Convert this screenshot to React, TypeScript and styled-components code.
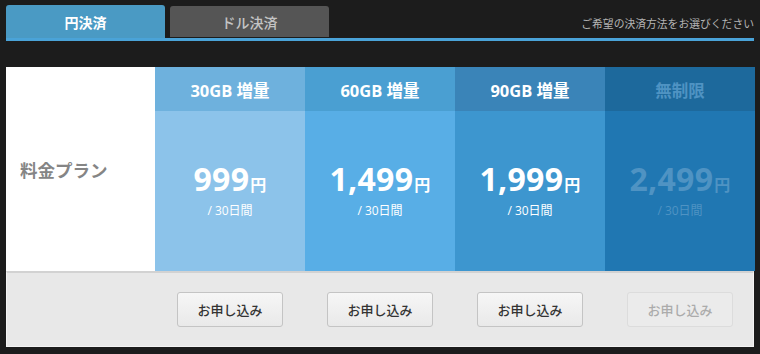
import styled, { createGlobalStyle } from "styled-components";

const GlobalStyle = createGlobalStyle`
  body {
    margin: 0;
    background: #1c1c1c;
    font-family: "Open Sans", "Noto Sans CJK JP", sans-serif;
  }
`;

const Page = styled.div`
  width: 748px;
  padding: 5px 6px 6px;
`;

const TabBar = styled.div`
  display: flex;
  align-items: flex-end;
  gap: 5px;
  border-bottom: 3px solid #4aa3d8;
`;

const Tab = styled.div<{ $active?: boolean }>`
  width: 159px;
  height: ${(p) => (p.$active ? "33px" : "31px")};
  margin-bottom: ${(p) => (p.$active ? "0" : "1px")};
  display: flex;
  align-items: center;
  justify-content: center;
  border-radius: 3px 3px 0 0;
  background: ${(p) => (p.$active ? "#4a9ac4" : "#555555")};
  color: ${(p) => (p.$active ? "#ffffff" : "#c4c4c4")};
  font-family: "Noto Sans CJK JP", sans-serif;
  font-size: 14px;
  font-weight: ${(p) => (p.$active ? 700 : 500)};
`;

const Hint = styled.div`
  margin-left: auto;
  padding-bottom: 7px;
  color: #b4b4b4;
  font-family: "Noto Sans CJK JP", sans-serif;
  font-size: 10.8px;
`;

const Table = styled.div`
  margin-top: 26px;
  display: grid;
  grid-template-columns: 149px repeat(4, 150px);
  grid-template-rows: 44px 160px;
`;

const LabelCell = styled.div`
  grid-row: 1 / span 2;
  background: #ffffff;
  display: flex;
  align-items: center;
  padding-left: 14px;
  color: #858585;
  font-family: "Noto Sans CJK JP", sans-serif;
  font-size: 17.5px;
  font-weight: 700;
`;

const HeadCell = styled.div<{ $bg: string; $fg: string }>`
  background: ${(p) => p.$bg};
  color: ${(p) => p.$fg};
  display: flex;
  align-items: center;
  justify-content: center;
  font-size: 16.5px;
  font-weight: 700;
  padding-top: 1px;
`;

const PriceCell = styled.div<{ $bg: string; $fg: string }>`
  grid-row: 2;
  background: ${(p) => p.$bg};
  color: ${(p) => p.$fg};
  display: flex;
  flex-direction: column;
  align-items: center;
  justify-content: center;
  padding-bottom: 4px;
`;

const Amount = styled.div`
  font-size: 32px;
  font-weight: 700;
  line-height: 38px;
  letter-spacing: 0.3px;

  span {
    font-family: "Noto Sans CJK JP", sans-serif;
    font-size: 16px;
    margin-left: 1px;
  }
`;

const Period = styled.div`
  font-size: 12px;
  line-height: 16px;
  font-family: "Open Sans", "Noto Sans CJK JP", sans-serif;
`;

const Footer = styled.div`
  display: grid;
  grid-template-columns: 148px repeat(4, 150px);
  background: #e8e8e8;
  border: 1px solid #f4f4f4;
  border-top: 2px solid #d2d2d2;
  box-sizing: border-box;
  height: 76px;
`;

const ButtonSlot = styled.div`
  display: flex;
  justify-content: center;
  padding-top: 19px;
`;

const ApplyButton = styled.button<{ $disabled?: boolean }>`
  width: 106px;
  height: 35px;
  border-radius: 3px;
  border: 1px solid ${(p) => (p.$disabled ? "#dcdcdc" : "#c4c4c4")};
  background: ${(p) =>
    p.$disabled ? "#ebebeb" : "linear-gradient(#f6f6f6, #e9e9e9)"};
  color: ${(p) => (p.$disabled ? "#ababab" : "#333333")};
  font-family: "Noto Sans CJK JP", sans-serif;
  font-size: 13px;
  font-weight: 500;
  padding: 0;
`;

const plans = [
  { name: "30GB 増量", price: "999", head: "#6eb1dd", body: "#8cc3ea", fg: "#ffffff" },
  { name: "60GB 増量", price: "1,499", head: "#4a9fd2", body: "#58aee6", fg: "#ffffff" },
  { name: "90GB 増量", price: "1,999", head: "#3a84b8", body: "#3d96cf", fg: "#ffffff" },
  { name: "無制限", price: "2,499", head: "#1d699c", body: "#2077b2", fg: "#4f93c3", disabled: true },
];

export default function App() {
  return (
    <Page>
      <GlobalStyle />
      <TabBar>
        <Tab $active>円決済</Tab>
        <Tab>ドル決済</Tab>
        <Hint>ご希望の決済方法をお選びください</Hint>
      </TabBar>
      <Table>
        <LabelCell>料金プラン</LabelCell>
        {plans.map((plan) => (
          <HeadCell key={`h-${plan.name}`} $bg={plan.head} $fg={plan.fg}>
            {plan.name}
          </HeadCell>
        ))}
        {plans.map((plan) => (
          <PriceCell key={`p-${plan.name}`} $bg={plan.body} $fg={plan.fg}>
            <Amount>
              {plan.price}
              <span>円</span>
            </Amount>
            <Period>/ 30日間</Period>
          </PriceCell>
        ))}
      </Table>
      <Footer>
        <div />
        {plans.map((plan) => (
          <ButtonSlot key={`b-${plan.name}`}>
            <ApplyButton $disabled={plan.disabled}>お申し込み</ApplyButton>
          </ButtonSlot>
        ))}
      </Footer>
    </Page>
  );
}
